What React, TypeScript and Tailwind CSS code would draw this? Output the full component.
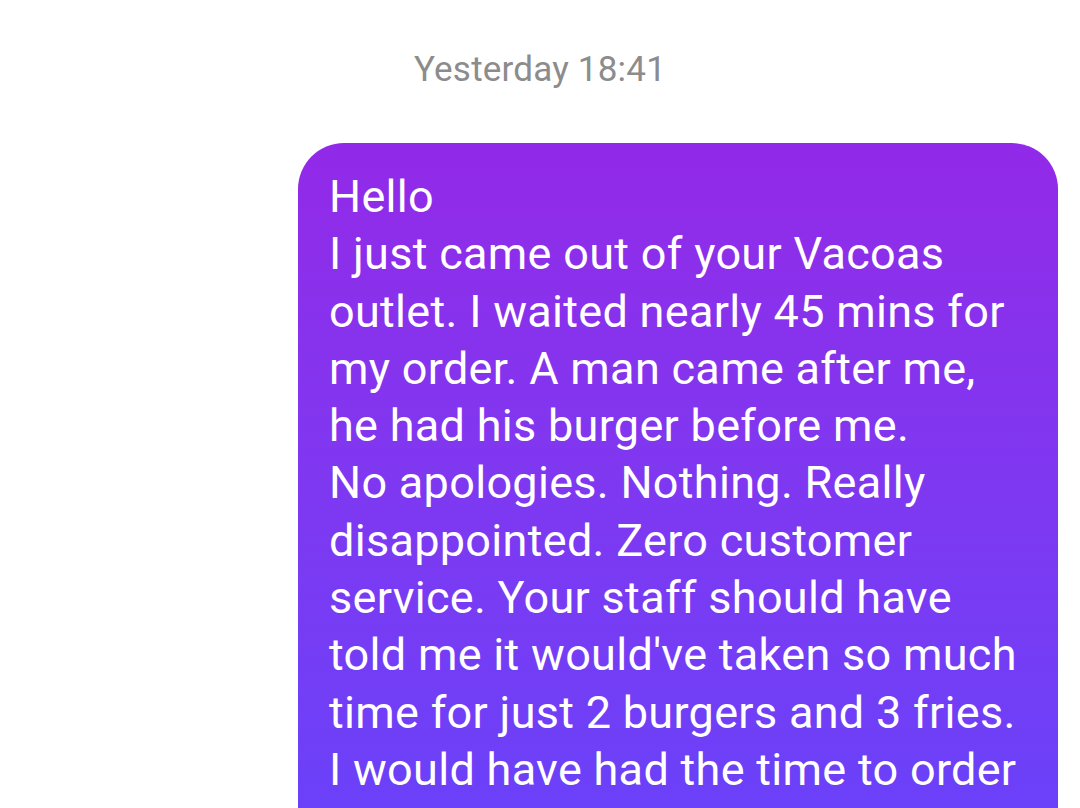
import React from "react";

const App = () => {
  return (
    <div className="w-[1080px] h-[808px] overflow-hidden bg-white font-['Roboto',sans-serif]">
      <div className="flex justify-center pt-[50px] pb-[53px]">
        <p className="text-[35px] leading-[40px] text-[#8c8c8c] tracking-[0.2px]">
          Yesterday 18:41
        </p>
      </div>

      <div className="flex justify-end pr-[22px]">
        <div className="w-[760px] rounded-[46px] bg-gradient-to-b from-[#9229e8] to-[#6443fb] pl-[31px] pr-[33px] pt-[25px] pb-[40px] text-white">
          <p className="text-[45px] leading-[57.3px] tracking-[0.3px]">
            Hello
            <br />
            I just came out of your Vacoas outlet. I waited nearly 45 mins for
            my order. A man came after me, he had his burger before me.
            <br />
            No apologies. Nothing. Really disappointed. Zero customer service.
            Your staff should have told me it would've taken so much time for
            just 2 burgers and 3 fries. I would have had the time to order
            somewhere else.
          </p>
        </div>
      </div>
    </div>
  );
};

export default App;
